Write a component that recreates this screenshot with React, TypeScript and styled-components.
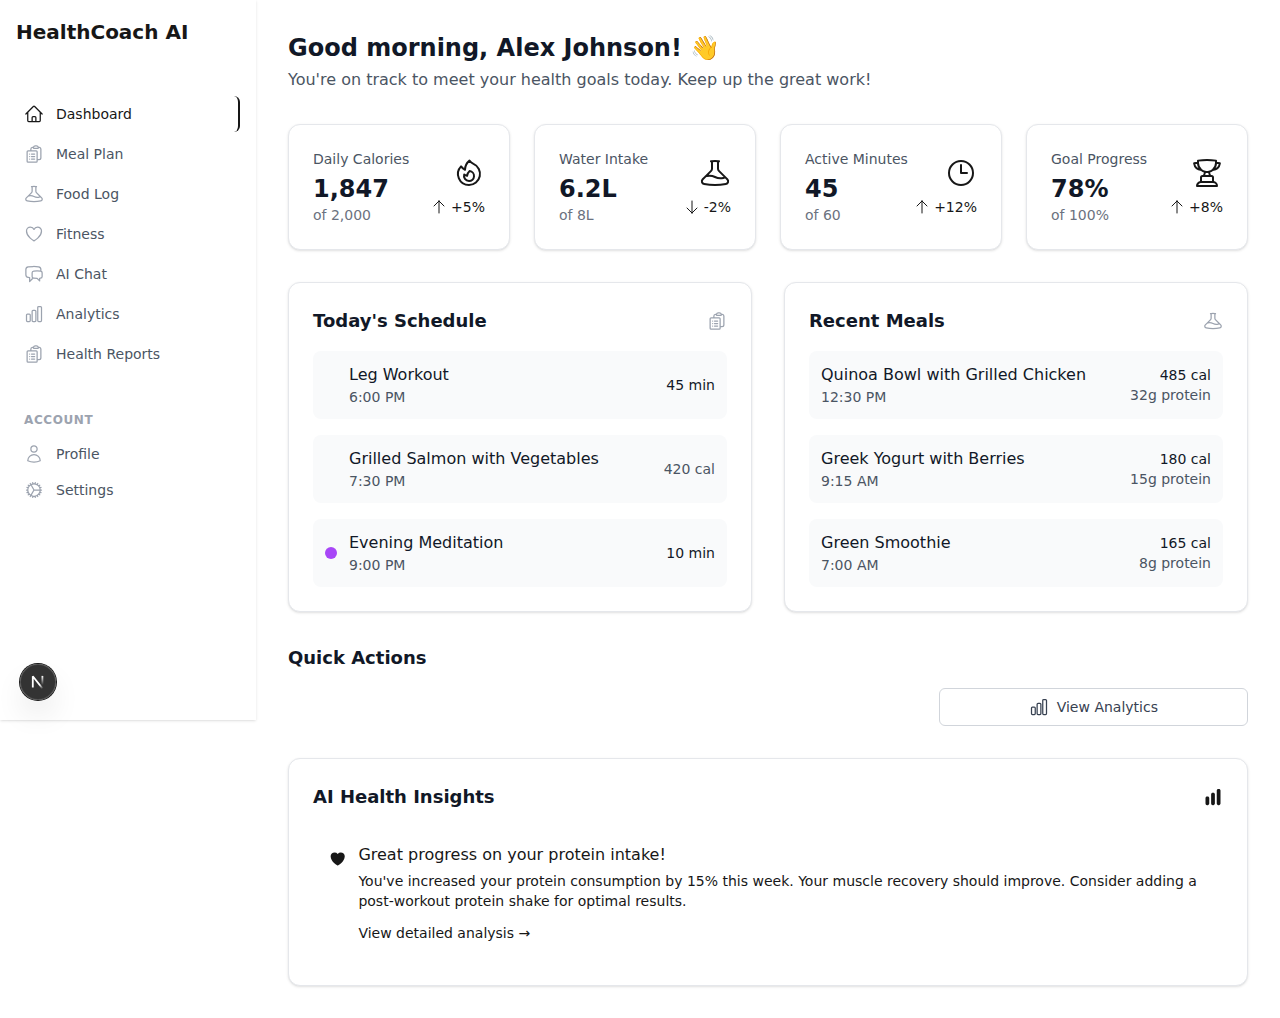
import React from "react";
import styled, { createGlobalStyle, css } from "styled-components";
import {
  HiOutlineHome,
  HiOutlineClipboardDocumentList,
  HiOutlineBeaker,
  HiOutlineHeart,
  HiOutlineChatBubbleLeftRight,
  HiOutlineChartBar,
  HiOutlineUser,
  HiOutlineCog,
  HiOutlineFire,
  HiOutlineClock,
  HiOutlineTrophy,
  HiOutlineArrowUp,
  HiOutlineArrowDown,
  HiChartBar,
  HiHeart,
} from "react-icons/hi2";

const GlobalStyle = createGlobalStyle`
  *, *::before, *::after { box-sizing: border-box; }
  body {
    margin: 0;
    background: #fff;
    color: #171717;
    font-family: "DejaVu Sans", sans-serif;
    font-size: 16px;
    line-height: 24px;
  }
  h1, h2, h3, p { margin: 0; }
  svg { display: block; }
`;

const Shell = styled.div`
  display: flex;
  align-items: flex-start;
  min-height: 1018px;
`;

const Sidebar = styled.aside`
  flex: none;
  width: 256px;
  height: 720px;
  background: #fff;
  box-shadow: 0 1px 3px rgba(0, 0, 0, 0.1), 0 1px 2px -1px rgba(0, 0, 0, 0.1);
  position: relative;
`;

const Brand = styled.div`
  display: flex;
  align-items: center;
  height: 64px;
  padding: 0 16px;
  font-size: 20px;
  line-height: 28px;
  font-weight: 700;
`;

const Nav = styled.nav<{ $gap: number }>`
  display: flex;
  flex-direction: column;
  gap: ${(p) => p.$gap}px;
  padding: 0 16px;
`;

const PrimaryNav = styled(Nav)`
  margin-top: 32px;
`;

const NavItem = styled.a<{ $active?: boolean }>`
  display: flex;
  align-items: center;
  gap: 12px;
  height: 36px;
  padding: 8px;
  border-radius: 6px;
  font-size: 14px;
  line-height: 20px;
  color: #4b5563;
  svg {
    width: 20px;
    height: 20px;
    color: #9ca3af;
  }
  ${(p) =>
    p.$active &&
    css`
      color: #171717;
      border-right: 2px solid #171717;
      svg {
        color: #171717;
      }
    `}
`;

const NavHeading = styled.h3`
  margin: 40px 24px 8px;
  font-size: 12px;
  line-height: 16px;
  font-weight: 600;
  letter-spacing: 0.6px;
  text-transform: uppercase;
  color: #9ca3af;
`;

const DevBadge = styled.div`
  position: absolute;
  left: 20px;
  bottom: 20px;
  width: 36px;
  height: 36px;
  border-radius: 50%;
  display: grid;
  place-items: center;
  background: rgba(0, 0, 0, 0.8);
  box-shadow: 0 0 0 1px #171717, inset 0 0 0 1px rgba(255, 255, 255, 0.14),
    0 16px 32px -8px rgba(0, 0, 0, 0.24);
`;

const Main = styled.main`
  flex: 1;
  min-width: 0;
  padding: 32px;
`;

const Title = styled.h1`
  font-size: 24px;
  line-height: 32px;
  font-weight: 700;
  color: #111827;
`;

const Subtitle = styled.p`
  margin-top: 4px;
  color: #4b5563;
`;

const Card = styled.section`
  padding: 24px;
  background: #fff;
  border: 1px solid #e5e7eb;
  border-radius: 12px;
  box-shadow: 0 1px 3px rgba(0, 0, 0, 0.1), 0 1px 2px -1px rgba(0, 0, 0, 0.1);
`;

const StatGrid = styled.div`
  display: grid;
  grid-template-columns: repeat(4, 1fr);
  gap: 24px;
  margin-top: 32px;
`;

const StatCard = styled(Card)`
  display: flex;
  align-items: center;
  justify-content: space-between;
`;

const Small = styled.p<{ $color?: string }>`
  font-size: 14px;
  line-height: 20px;
  white-space: nowrap;
  color: ${(p) => p.$color || "#4b5563"};
`;

const StatValue = styled.p`
  margin-top: 4px;
  font-size: 24px;
  line-height: 32px;
  font-weight: 700;
  color: #111827;
`;

const StatSide = styled.div`
  display: flex;
  flex-direction: column;
  align-items: flex-end;
  gap: 8px;
`;

const Trend = styled.div`
  display: flex;
  align-items: center;
  gap: 4px;
  font-size: 14px;
  line-height: 20px;
`;

const PanelGrid = styled.div`
  display: grid;
  grid-template-columns: 1fr 1fr;
  gap: 32px;
  margin-top: 32px;
`;

const PanelHeader = styled.header<{ $iconColor: string }>`
  display: flex;
  align-items: center;
  justify-content: space-between;
  margin-bottom: 16px;
  svg {
    color: ${(p) => p.$iconColor};
  }
`;

const Heading = styled.h2`
  font-size: 18px;
  line-height: 28px;
  font-weight: 600;
  color: #111827;
`;

const Rows = styled.div`
  display: flex;
  flex-direction: column;
  gap: 16px;
`;

const Row = styled.div`
  display: flex;
  align-items: center;
  gap: 12px;
  padding: 12px;
  border-radius: 8px;
  background: #f9fafb;
`;

const Dot = styled.span<{ $color: string }>`
  width: 12px;
  height: 12px;
  border-radius: 50%;
  background: ${(p) => p.$color};
`;

const RowText = styled.div`
  flex: 1;
`;

const RowTitle = styled.p`
  color: #111827;
`;

const RowValues = styled.div`
  text-align: right;
`;

const QuickActions = styled.section`
  margin-top: 32px;
`;

const ActionGrid = styled.div`
  display: grid;
  grid-template-columns: repeat(3, 1fr);
  gap: 16px;
  margin-top: 16px;
`;

const ActionButton = styled.button`
  grid-column: 3;
  display: flex;
  align-items: center;
  justify-content: center;
  gap: 8px;
  padding: 8px 16px;
  font: inherit;
  font-size: 14px;
  line-height: 20px;
  color: #374151;
  background: #fff;
  border: 1px solid #d1d5db;
  border-radius: 6px;
`;

const InsightCard = styled(Card)`
  margin-top: 32px;
`;

const Insight = styled.div`
  display: flex;
  align-items: flex-start;
  padding: 16px 16px 18px;
  > svg {
    margin-top: 4px;
  }
`;

const InsightText = styled.div`
  margin-left: 12px;
`;

const InsightTitle = styled.h3`
  font-size: 16px;
  font-weight: 500;
`;

const InsightBody = styled.p`
  margin-top: 4px;
  font-size: 14px;
  line-height: 20px;
`;

const InsightLink = styled.a`
  display: block;
  margin-top: 12px;
  font-size: 14px;
  line-height: 20px;
`;

const primary = [
  { label: "Dashboard", icon: HiOutlineHome },
  { label: "Meal Plan", icon: HiOutlineClipboardDocumentList },
  { label: "Food Log", icon: HiOutlineBeaker },
  { label: "Fitness", icon: HiOutlineHeart },
  { label: "AI Chat", icon: HiOutlineChatBubbleLeftRight },
  { label: "Analytics", icon: HiOutlineChartBar },
  { label: "Health Reports", icon: HiOutlineClipboardDocumentList },
];

const account = [
  { label: "Profile", icon: HiOutlineUser },
  { label: "Settings", icon: HiOutlineCog },
];

const stats = [
  { label: "Daily Calories", value: "1,847", of: "of 2,000", trend: "+5%", up: true, icon: HiOutlineFire },
  { label: "Water Intake", value: "6.2L", of: "of 8L", trend: "-2%", up: false, icon: HiOutlineBeaker },
  { label: "Active Minutes", value: "45", of: "of 60", trend: "+12%", up: true, icon: HiOutlineClock },
  { label: "Goal Progress", value: "78%", of: "of 100%", trend: "+8%", up: true, icon: HiOutlineTrophy },
];

const schedule = [
  { title: "Leg Workout", time: "6:00 PM", value: "45 min", dot: "transparent", tone: "#111827" },
  { title: "Grilled Salmon with Vegetables", time: "7:30 PM", value: "420 cal", dot: "transparent", tone: "#4b5563" },
  { title: "Evening Meditation", time: "9:00 PM", value: "10 min", dot: "#a846f7", tone: "#111827" },
];

const meals = [
  { title: "Quinoa Bowl with Grilled Chicken", time: "12:30 PM", cal: "485 cal", protein: "32g protein" },
  { title: "Greek Yogurt with Berries", time: "9:15 AM", cal: "180 cal", protein: "15g protein" },
  { title: "Green Smoothie", time: "7:00 AM", cal: "165 cal", protein: "8g protein" },
];

function NextMark() {
  return (
    <svg width="16" height="16" viewBox="0 0 16 16" fill="none">
      <defs>
        <linearGradient id="diag" x1="9.6" y1="10.8" x2="13.4" y2="15.6" gradientUnits="userSpaceOnUse">
          <stop stopColor="#fff" />
          <stop offset="0.8" stopColor="#fff" stopOpacity="0" />
          <stop offset="1" stopColor="#fff" stopOpacity="0" />
        </linearGradient>
        <linearGradient id="stem" x1="12" y1="1.8" x2="12" y2="11" gradientUnits="userSpaceOnUse">
          <stop stopColor="#fff" />
          <stop offset="1" stopColor="#fff" stopOpacity="0" />
        </linearGradient>
      </defs>
      <path d="M13.4 15.6L2.8 2.2V13.4" stroke="url(#diag)" strokeWidth="1.8" strokeLinejoin="bevel" />
      <path d="M12.4 1.9V13.4" stroke="url(#stem)" strokeWidth="1.8" />
    </svg>
  );
}

export default function App() {
  return (
    <>
      <GlobalStyle />
      <Shell>
        <Sidebar>
          <Brand>HealthCoach AI</Brand>
          <PrimaryNav $gap={4}>
            {primary.map(({ label, icon: Icon }, i) => (
              <NavItem key={label} $active={i === 0}>
                <Icon />
                {label}
              </NavItem>
            ))}
          </PrimaryNav>
          <NavHeading>Account</NavHeading>
          <Nav $gap={0}>
            {account.map(({ label, icon: Icon }) => (
              <NavItem key={label}>
                <Icon />
                {label}
              </NavItem>
            ))}
          </Nav>
          <DevBadge>
            <NextMark />
          </DevBadge>
        </Sidebar>
        <Main>
          <Title>Good morning, Alex Johnson! 👋</Title>
          <Subtitle>You're on track to meet your health goals today. Keep up the great work!</Subtitle>
          <StatGrid>
            {stats.map(({ label, value, of, trend, up, icon: Icon }) => (
              <StatCard key={label}>
                <div>
                  <Small>{label}</Small>
                  <StatValue>{value}</StatValue>
                  <Small $color="#6b7280">{of}</Small>
                </div>
                <StatSide>
                  <Icon size={32} />
                  <Trend>
                    {up ? <HiOutlineArrowUp size={16} /> : <HiOutlineArrowDown size={16} />}
                    {trend}
                  </Trend>
                </StatSide>
              </StatCard>
            ))}
          </StatGrid>
          <PanelGrid>
            <Card>
              <PanelHeader $iconColor="#9ca3af">
                <Heading>Today's Schedule</Heading>
                <HiOutlineClipboardDocumentList size={20} />
              </PanelHeader>
              <Rows>
                {schedule.map((s) => (
                  <Row key={s.title}>
                    <Dot $color={s.dot} />
                    <RowText>
                      <RowTitle>{s.title}</RowTitle>
                      <Small>{s.time}</Small>
                    </RowText>
                    <Small $color={s.tone}>{s.value}</Small>
                  </Row>
                ))}
              </Rows>
            </Card>
            <Card>
              <PanelHeader $iconColor="#9ca3af">
                <Heading>Recent Meals</Heading>
                <HiOutlineBeaker size={20} />
              </PanelHeader>
              <Rows>
                {meals.map((m) => (
                  <Row key={m.title}>
                    <RowText>
                      <RowTitle>{m.title}</RowTitle>
                      <Small>{m.time}</Small>
                    </RowText>
                    <RowValues>
                      <Small $color="#111827">{m.cal}</Small>
                      <Small>{m.protein}</Small>
                    </RowValues>
                  </Row>
                ))}
              </Rows>
            </Card>
          </PanelGrid>
          <QuickActions>
            <Heading>Quick Actions</Heading>
            <ActionGrid>
              <ActionButton>
                <HiOutlineChartBar size={20} />
                View Analytics
              </ActionButton>
            </ActionGrid>
          </QuickActions>
          <InsightCard>
            <PanelHeader $iconColor="#171717">
              <Heading>AI Health Insights</Heading>
              <HiChartBar size={20} />
            </PanelHeader>
            <Insight>
              <HiHeart size={24} />
              <InsightText>
                <InsightTitle>Great progress on your protein intake!</InsightTitle>
                <InsightBody>
                  You've increased your protein consumption by 15% this week. Your muscle recovery should improve.
                  Consider adding a post-workout protein shake for optimal results.
                </InsightBody>
                <InsightLink>View detailed analysis →</InsightLink>
              </InsightText>
            </Insight>
          </InsightCard>
        </Main>
      </Shell>
    </>
  );
}
